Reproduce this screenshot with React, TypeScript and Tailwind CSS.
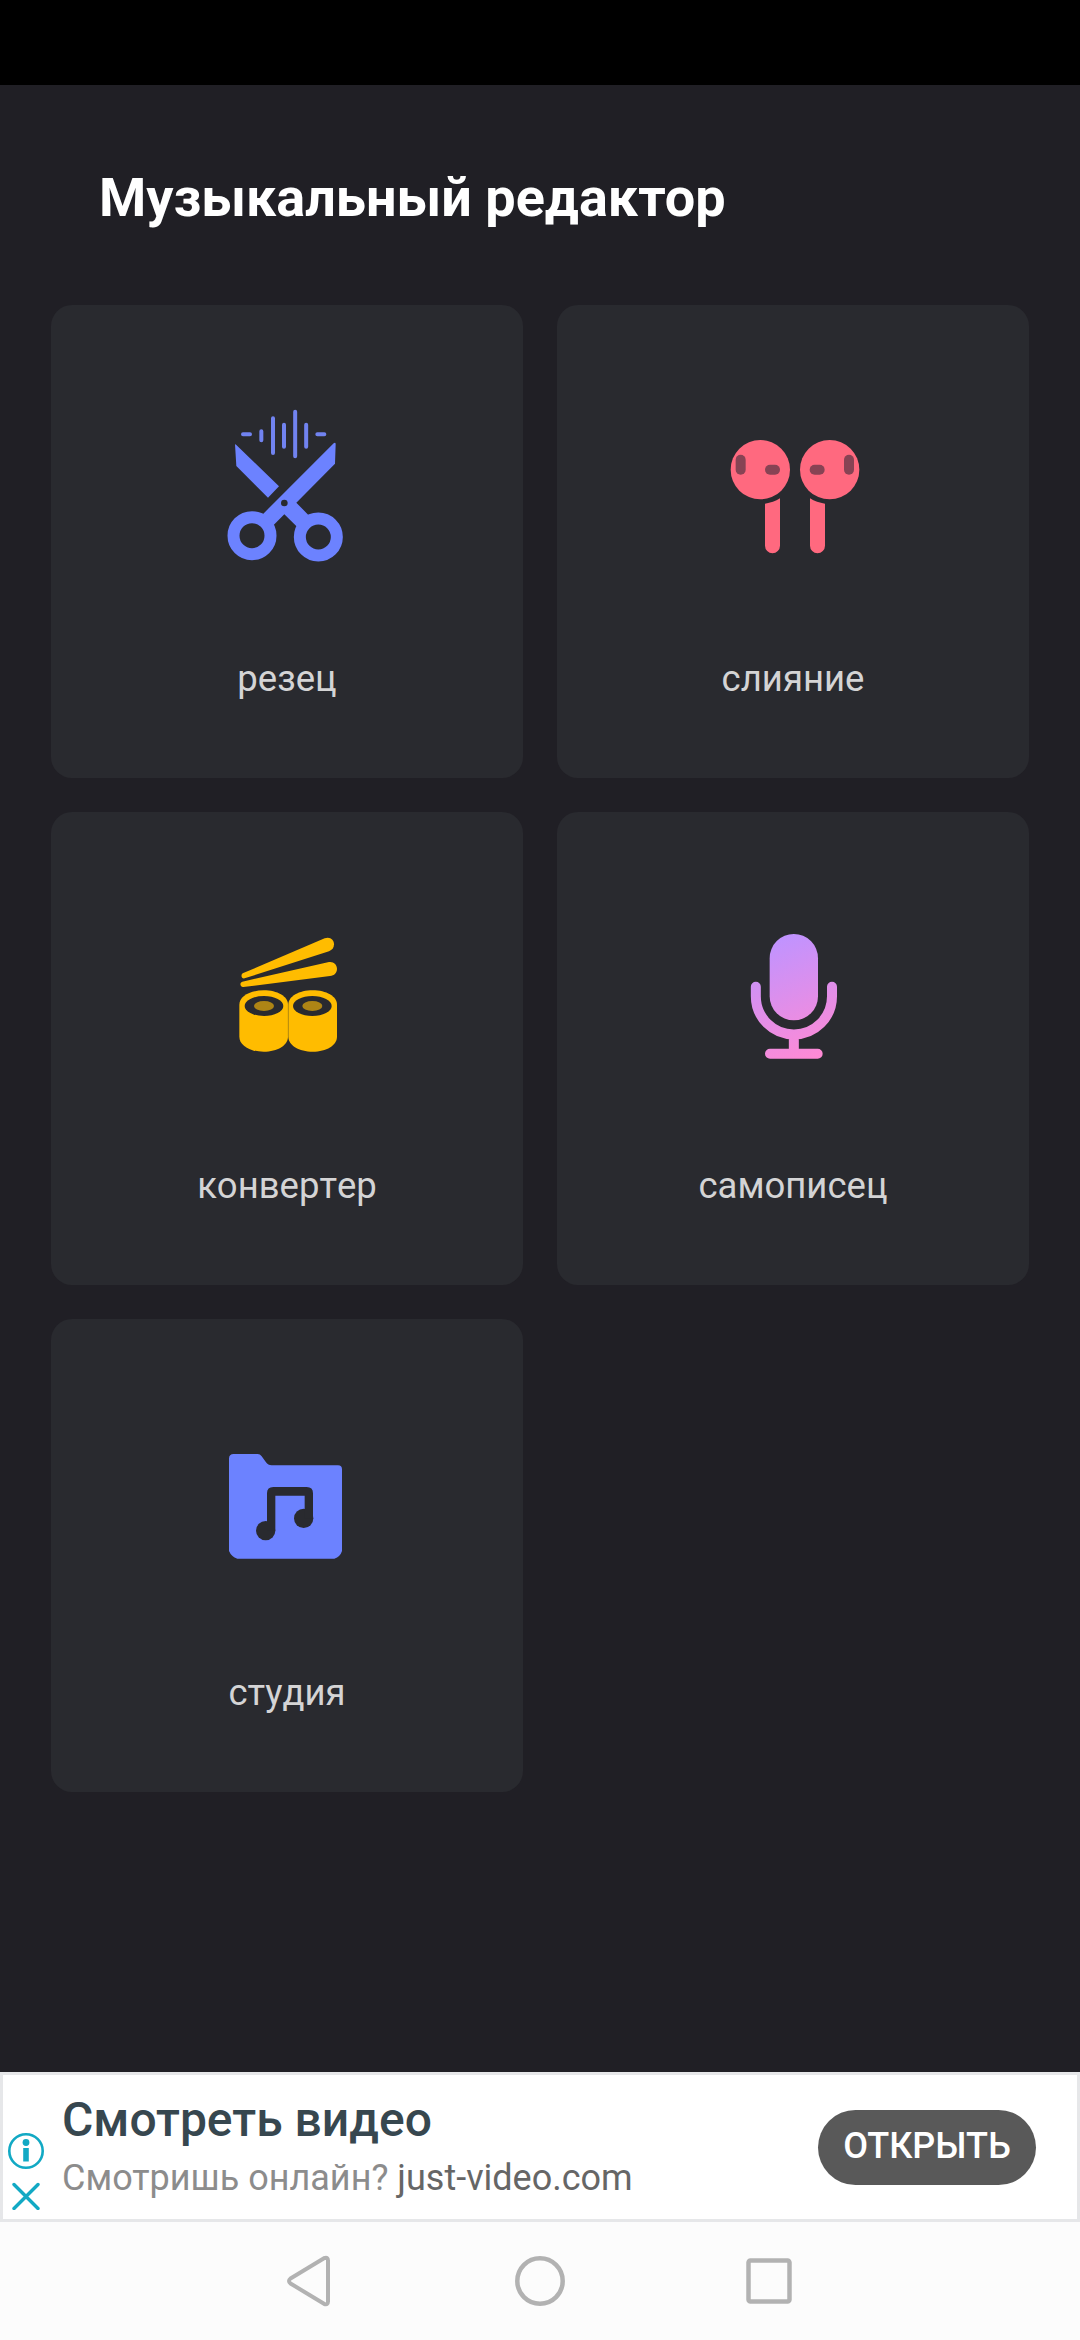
import type { ReactNode } from "react";

function CutterIcon() {
  return (
    <svg className="size-[180px]" viewBox="-9 21 540 540" fill="none">
      <g stroke="#7183f0" strokeWidth="12" strokeLinecap="round">
        <path d="M129 132.500H150M184 124V151M219 85V189M252 104V170M285.500 65V199M318.500 104V170M352 132.500H373" />
      </g>
      <path d="M105 163Q106 162 109 165L237 289L204 323L109 228Z" fill="#6c82ff" />
      <path d="M401 160Q407 156 407 163L405 221L289 338L328 378L294 413L253 373L215 411L184 377Z" fill="#6c82ff" />
      <circle cx="156" cy="437" r="55.500" stroke="#6c82ff" strokeWidth="36" />
      <circle cx="355" cy="441" r="55.500" stroke="#6c82ff" strokeWidth="36" />
      <circle cx="253" cy="339" r="10" fill="#292a2f" />
    </svg>
  );
}

function MergeIcon() {
  return (
    <svg className="size-[180px]" viewBox="-21 -69 540 540">
      <g fill="#ff697f">
        <circle cx="151" cy="149" r="89" />
        <circle cx="359" cy="149" r="89" />
        <path d="M165 251Q190 248 210 235V377A22.500 22.500 0 0 1 165 377Z" />
        <path d="M345 251Q320 248 300 235V377A22.500 22.500 0 0 0 345 377Z" />
      </g>
      <g fill="#874354">
        <rect x="77" y="104" width="30" height="60" rx="15" />
        <rect x="402" y="104" width="30" height="60" rx="15" />
        <rect x="165" y="134" width="45" height="30" rx="15" />
        <rect x="299" y="134" width="45" height="30" rx="15" />
      </g>
    </svg>
  );
}

function ConverterIcon() {
  return (
    <svg className="size-[180px]" viewBox="-69 -48 540 540">
      <g fill="#ffbc00">
        <path d="M68 160L314 55C331 49 342 60 342 73C342 84 336 90 327 94L74 175C65 177 61 165 68 160Z" />
        <path d="M67 185L327 126C341 124 351 134 351 146C351 158 343 167 330 168L70 201C60 202 58 188 67 185Z" />
        <path d="M58 254C58 229 90 211 131 211C172 211 204 229 204 254V350C204 376 172 395 131 395C90 395 58 376 58 350Z" />
        <path d="M205 254C205 229 237 211 278 211C319 211 351 229 351 254V350C351 376 319 395 278 395C237 395 205 376 205 350Z" />
      </g>
      <path d="M204.500 254V350" stroke="#c99709" strokeWidth="2" />
      <g fill="#292a2f">
        <ellipse cx="132" cy="258" rx="58" ry="30" />
        <ellipse cx="277" cy="258" rx="58" ry="30" />
      </g>
      <g fill="#ae8515">
        <ellipse cx="132" cy="258" rx="30" ry="15" />
        <ellipse cx="277" cy="258" rx="30" ry="15" />
      </g>
    </svg>
  );
}

function RecorderIcon() {
  return (
    <svg className="size-[180px]" viewBox="-81 -48 540 540" fill="none">
      <defs>
        <linearGradient id="mic" gradientUnits="userSpaceOnUse" x1="110" y1="70" x2="250" y2="415">
          <stop offset="0" stopColor="#c093ff" />
          <stop offset="1" stopColor="#ff8ad5" />
        </linearGradient>
      </defs>
      <rect x="119" y="42" width="145" height="259" rx="72.500" fill="url(#mic)" />
      <path
        d="M77.500 200V229A114 114 0 0 0 306 229V200M191.500 345V401M120 401.500H263"
        stroke="url(#mic)"
        strokeWidth="30"
        strokeLinecap="round"
      />
    </svg>
  );
}

function StudioIcon() {
  return (
    <svg className="size-[180px]" viewBox="-39 -87 540 540">
      <path
        d="M71 42H143Q150 42 155 49L168 67Q174 76 185 76H384Q396 76 396 88V333Q391 350 373 356H82Q64 350 57 333V56Q57 42 71 42Z"
        fill="#6c82ff"
      />
      <g fill="#292a2f">
        <circle cx="167" cy="272" r="29" />
        <circle cx="281" cy="235" r="29" />
        <path d="M171 245V160Q171 141 190 141H290Q309 141 309 160V235H284V167H196V272H171Z" />
      </g>
    </svg>
  );
}

const tools: { label: string; icon: ReactNode }[] = [
  { label: "резец", icon: <CutterIcon /> },
  { label: "слияние", icon: <MergeIcon /> },
  { label: "конвертер", icon: <ConverterIcon /> },
  { label: "самописец", icon: <RecorderIcon /> },
  { label: "студия", icon: <StudioIcon /> },
];

function AdBanner() {
  return (
    <section className="flex h-[150px] shrink-0 items-center border-[3px] border-[#e6e7e9] bg-white">
      <div className="flex w-[45px] flex-col items-center gap-3 self-start pt-[57px]">
        <svg className="size-[38px]" viewBox="0 0 38 38" fill="none">
          <circle cx="19" cy="19" r="16.700" stroke="#12a9c4" strokeWidth="2.600" />
          <circle cx="19" cy="10.500" r="3.400" fill="#12a9c4" />
          <path d="M19 16V29.500" stroke="#12a9c4" strokeWidth="5.600" />
        </svg>
        <svg className="size-[28px]" viewBox="0 0 28 28" fill="none">
          <path
            d="M2 2.500L26 26.500M26 2.500L2 26.500"
            stroke="#12a9c4"
            strokeWidth="3.400"
            strokeLinecap="round"
          />
        </svg>
      </div>
      <div className="flex flex-1 flex-col self-start pt-[15px] pl-[14px]">
        <h2 className="text-[48px] leading-[60px] font-medium whitespace-nowrap text-[#37474f]">Смотреть видео</h2>
        <p className="mt-[2px] text-[36px] leading-[52px] whitespace-nowrap text-[#8c8c8c]">
          Смотришь онлайн? <span className="text-[#666666]">just-video.com</span>
        </p>
      </div>
      <button className="mr-[41px] h-[75px] w-[218px] rounded-full bg-[#595959] pb-[3px] text-[36px] font-medium text-white">
        ОТКРЫТЬ
      </button>
    </section>
  );
}

function NavigationBar() {
  return (
    <nav className="flex h-[118px] shrink-0 items-center justify-center gap-[174px] bg-[#fcfcfc]">
      <svg className="size-[56px]" viewBox="0 0 56 56" fill="none" stroke="#b2b2b2" strokeWidth="4">
        <path
          d="M42 5.200Q46 3.500 46 7.500V48.500Q46 52.500 42 50.800L8.500 30.500Q5.500 28 8.500 25.500Z"
          strokeLinejoin="round"
        />
      </svg>
      <svg className="size-[56px]" viewBox="0 0 56 56" fill="none" stroke="#b2b2b2" strokeWidth="4.500">
        <circle cx="28" cy="28" r="22.700" />
      </svg>
      <svg className="size-[56px]" viewBox="0 0 56 56" fill="none" stroke="#b2b2b2" strokeWidth="4.500">
        <rect x="6.500" y="7.500" width="41" height="41" rx="2" />
      </svg>
    </nav>
  );
}

export default function App() {
  return (
    <div className="flex h-[2340px] w-[1080px] flex-col overflow-hidden bg-[#201f25] font-['Roboto',sans-serif]">
      <div className="h-[85px] shrink-0 bg-black" />
      <main className="flex-1">
        <h1 className="h-[220px] pt-[81px] pl-[99px] text-[54px] leading-[64px] font-bold text-white">
          Музыкальный редактор
        </h1>
        <div className="grid grid-cols-2 gap-x-[34px] gap-y-[34px] px-[51px]">
          {tools.map(({ label, icon }) => (
            <div key={label} className="flex h-[473px] flex-col items-center rounded-[21px] bg-[#292a2f] pt-[92px]">
              {icon}
              <span className="mt-[80px] text-[36.500px] leading-[44px] text-[#d4d4d5] [font-kerning:none]">
                {label}
              </span>
            </div>
          ))}
        </div>
      </main>
      <AdBanner />
      <NavigationBar />
    </div>
  );
}
